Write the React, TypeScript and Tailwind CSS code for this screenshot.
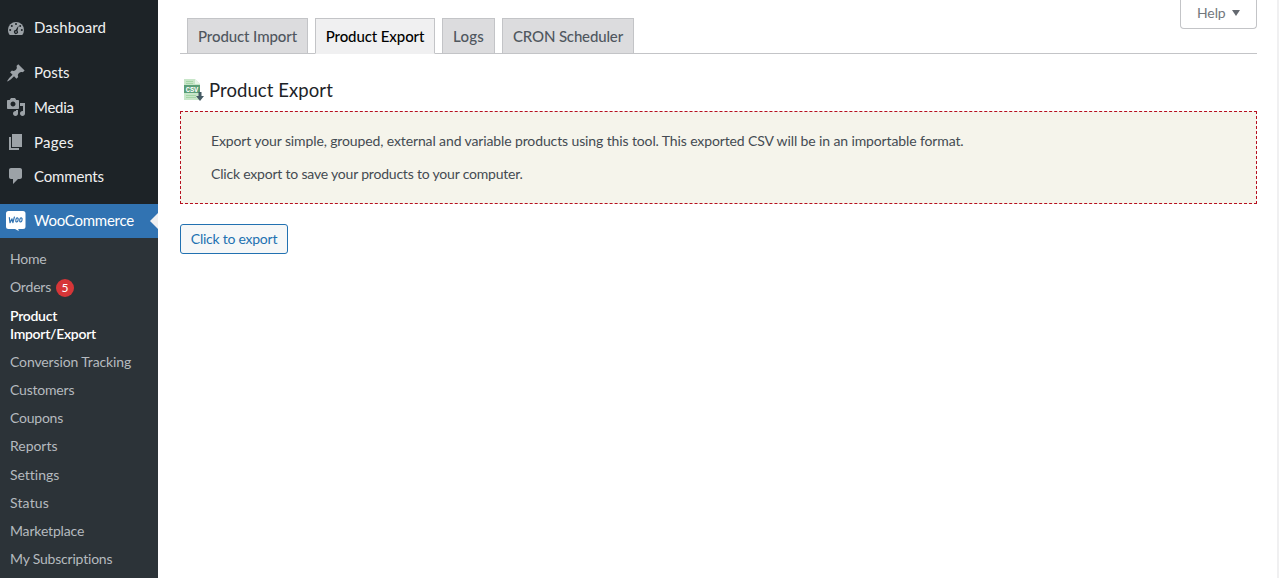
import React from "react";

const menu = [
  { label: "Posts", d: "M10.44 3.02l1.82-1.82 6.36 6.35-1.83 1.82c-1.05-.68-2.48-.57-3.41.36l-.75.75c-.92.93-1.04 2.35-.35 3.41l-1.83 1.82-2.41-2.41-2.8 2.79c-.42.42-3.38 2.71-3.8 2.29s1.86-3.39 2.28-3.81l2.79-2.79L4.1 9.36l1.83-1.82c1.05.69 2.48.57 3.4-.36l.75-.75c.93-.92 1.05-2.35.36-3.41z", spacing: "pb-0.5 tracking-[0.02px]" },
  { label: "Media", d: "M13 11V4c0-.55-.45-1-1-1h-1.67L9 1H5L3.67 3H2c-.55 0-1 .45-1 1v7c0 .55.45 1 1 1h10c.55 0 1-.45 1-1zM7 4.5c1.38 0 2.5 1.12 2.5 2.5S8.38 9.5 7 9.5 4.5 8.38 4.5 7 5.62 4.5 7 4.5zM14 6h5v10.5c0 1.38-1.12 2.5-2.5 2.5S14 17.88 14 16.5s1.12-2.5 2.5-2.5c.17 0 .34.02.5.05V9h-3V6zm-4 8.05V13h2v3.5c0 1.38-1.12 2.5-2.5 2.5S7 17.88 7 16.5 8.12 14 9.5 14c.17 0 .34.02.5.05z", spacing: "pb-px tracking-[-0.25px]" },
  { label: "Pages", d: "M6 15V2h10v13H6zm-1 1h8v2H3V5h2v11z", spacing: "tracking-[0.3px]" },
  { label: "Comments", d: "M5 2h9c1.1 0 2 .9 2 2v7c0 1.1-.9 2-2 2h-2l-5 5v-5H5c-1.1 0-2-.9-2-2V4c0-1.1.9-2 2-2z", spacing: "tracking-[-0.15px]" },
];

const submenu = [
  { label: "Conversion Tracking", spacing: "tracking-[-0.13px]" },
  { label: "Customers", spacing: "tracking-[-0.2px]" },
  { label: "Coupons", spacing: "tracking-[-0.23px]" },
  { label: "Reports", spacing: "tracking-[-0.03px]" },
  { label: "Settings", spacing: "tracking-[-0.03px]" },
  { label: "Status", spacing: "tracking-[0.16px]" },
  { label: "Marketplace", spacing: "tracking-[-0.17px]" },
  { label: "My Subscriptions", spacing: "tracking-[-0.2px]" },
];

function DashboardIcon() {
  return (
    <svg viewBox="0 0 20 20" className="size-5 shrink-0">
      <path fill="#9ca2a7" d="M3.76 17h12.48A8 8 0 0 0 18 12a8 8 0 1 0-16 0c0 1.89.66 3.63 1.76 5z" />
      <g fill="#1d2327">
        <circle cx="10" cy="6" r="1" /><circle cx="5.8" cy="8" r="1" /><circle cx="14.2" cy="8" r="1" />
        <circle cx="4.2" cy="12" r="1" /><circle cx="15.8" cy="12" r="1" />
        <path d="M12.6 7.6l-1.1 5.2a2 2 0 1 1-1.9-.7z" />
      </g>
      <circle cx="10" cy="14" r=".8" fill="#9ca2a7" />
    </svg>
  );
}

function WooIcon() {
  return (
    <svg viewBox="0 0 20 20" className="size-5 shrink-0">
      <path fill="#fff" d="M2.5 0h14.500A2.500 2.500 0 0 1 19.500 2.500v13a2.500 2.500 0 0 1-2.500 2.500h-4.800l.6 2-3.800-2H2.500A2.500 2.500 0 0 1 0 15.500v-13A2.500 2.500 0 0 1 2.500 0z" />
      <g fill="none" stroke="#3173b2" strokeWidth="1.200" strokeLinecap="round" strokeLinejoin="round">
        <path d="M3.300 6.500l.7 5.200 2-3.800.9 3.800L8.400 6" />
        <ellipse cx="11" cy="8.900" rx="1.150" ry="2.100" transform="rotate(12 11 8.900)" />
        <ellipse cx="14.900" cy="8.900" rx="1.150" ry="2.100" transform="rotate(12 14.900 8.900)" />
      </g>
    </svg>
  );
}

function CsvIcon() {
  return (
    <svg viewBox="0 0 22 22" className="h-[22px] w-[22px] shrink-0">
      <path fill="#c8e6c9" d="M1 0h11l5 5v16H1z" />
      <path fill="#e8f5e9" d="M12 0l5 5h-5z" />
      <path stroke="#a5d6a7" d="M3 2.500h7M3 4.500h7M3 16.500h10M3 18.500h10" />
      <path fill="#5b9f78" d="M1 6h16v8H1z" />
      <text x="9" y="12.500" textAnchor="middle" fill="#fff" fontSize="7" fontWeight="700" fontFamily="Liberation Mono, monospace" textLength="12.500">CSV</text>
      <path fill="#455a64" d="M15.500 13h3v4h2.500l-4 5-4-5h2.500z" />
    </svg>
  );
}

const tabs = [
  { label: "Product Import", box: "w-[121px] bg-[#dcdcde] text-[#50575e] border-[#c3c4c7] tracking-[-0.1px]" },
  { label: "Product Export", box: "w-[120px] bg-[#f0f0f1] text-black border-[#c3c4c7] border-b-[#f0f0f1] tracking-[-0.1px]" },
  { label: "Logs", box: "w-[53px] bg-[#dcdcde] text-[#50575e] border-[#c3c4c7] tracking-[0.2px]" },
  { label: "CRON Scheduler", box: "w-[132px] bg-[#dcdcde] text-[#50575e] border-[#c3c4c7] tracking-[-0.15px]" },
];

export default function App() {
  return (
    <div className="flex h-[578px] w-[1279px] overflow-hidden bg-white font-['Lato',sans-serif]">
      <aside className="flex w-[158px] shrink-0 flex-col bg-[#1d2327] pt-[11px] text-[15px] leading-[18px] text-[#f0f0f1]">
        <a className="flex h-[34px] items-center gap-2 pl-1.5"><DashboardIcon /><span className="pb-0.5 tracking-[0.06px]">Dashboard</span></a>
        <div className="mt-[11px] mb-[11px] flex h-[137px] flex-col">
          {menu.map((m) => (
            <a key={m.label} className="flex flex-1 items-center gap-2 pl-1.5">
              <svg viewBox="0 0 20 20" className="size-5 shrink-0" fill="#9ca2a7"><path d={m.d} /></svg>
              <span className={m.spacing}>{m.label}</span>
            </a>
          ))}
        </div>
        <a className="flex h-[34px] shrink-0 items-center gap-2 bg-[#3173b2] pl-1.5 text-white">
          <WooIcon /><span className="flex-1 pb-0.5 tracking-[-0.25px]">WooCommerce</span>
          <svg viewBox="0 0 8 16" className="h-4 w-2" fill="#f0f0f1"><path d="M8 0v16L0 8z" /></svg>
        </a>
        <nav className="flex h-[340px] shrink-0 flex-col bg-[#2c3338] pt-[7px] pl-2.5 text-[14px] leading-[18.200px] text-[#b5babf]">
          <a className="py-[5px] tracking-[-0.25px]">Home</a>
          <a className="flex h-[28px] items-center gap-[5px] tracking-[-0.200px]">Orders<span className="mt-px flex size-[18px] items-center justify-center rounded-full bg-[#d63638] text-[12px] tracking-normal text-white">5</span></a>
          <a className="pt-[6px] pb-[4.300px] font-semibold tracking-[-0.280px] text-white">Product<br />Import/Export</a>
          {submenu.map((s) => (
            <a key={s.label} className="h-[28.180px] shrink-0 py-[5px]"><span className={s.spacing}>{s.label}</span></a>
          ))}
        </nav>
      </aside>
      <main className="flex w-[1121px] shrink-0 flex-col border-r-2 border-[#f0f0f1] pl-[22px]">
        <div className="flex h-[54px] w-[1077px] justify-between border-b border-[#c3c4c7]">
          <div className="mt-[18px] ml-[7px] flex h-9 gap-[7px]">
            {tabs.map((t) => (
              <a key={t.label} className={"flex items-center justify-center border text-[15px] font-medium " + t.box}>{t.label}</a>
            ))}
          </div>
          <div className="flex h-[29px] w-[77px] items-center rounded-b border border-t-0 border-[#c3c4c7] pb-[3px] pl-4 text-[14px] text-[#72777c]">
            <span className="w-[35px] tracking-[-0.100px]">Help</span>
            <svg viewBox="0 0 8 6" className="mt-px h-1.5 w-2" fill="#646970"><path d="M0 0h8L4 6z" /></svg>
          </div>
        </div>
        <h1 className="mt-[24px] flex h-[24px] items-center gap-[4px] pl-[3px] text-[18.500px] text-[#1d2327]"><CsvIcon /><span className="pt-px tracking-[0.080px]">Product Export</span></h1>
        <section className="mt-[9px] flex h-[93px] w-[1077px] flex-col gap-[13px] border border-dashed border-[#b70f1f] bg-[#f5f4eb] pt-[19px] pl-[30px] text-[14px] leading-5 text-[#444b52]">
          <p className="tracking-[-0.120px]">Export your simple, grouped, external and variable products using this tool. This exported CSV will be in an importable format.</p>
          <p className="tracking-[-0.200px]">Click export to save your products to your computer.</p>
        </section>
        <button className="mt-5 h-[30px] w-[108px] rounded-[3px] border border-[#2271b1] bg-[#f6f7f7] pb-0.5 text-[14px] tracking-[-0.250px] text-[#2271b1]">Click to export</button>
      </main>
    </div>
  );
}
